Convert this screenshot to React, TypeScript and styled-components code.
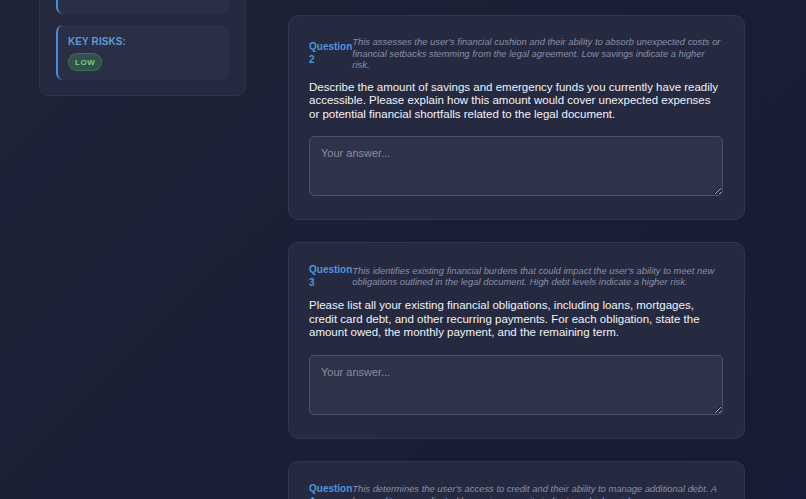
import styled, { createGlobalStyle } from 'styled-components';

const GlobalStyle = createGlobalStyle`
  html, body {
    margin: 0;
    padding: 0;
    height: 100%;
    overflow: hidden;
  }

  body {
    background: linear-gradient(135deg, #1e2338 0%, #1a1f35 50%, #171c36 100%);
    font-family: "Liberation Sans", Arial, Helvetica, sans-serif;
    color: #e8eaf2;
  }

  * {
    box-sizing: border-box;
  }
`;

const Layout = styled.div`
  display: flex;
  align-items: flex-start;
  gap: 42px;
  height: 499px;
  padding: 0 61px 0 39px;
  overflow: hidden;
`;

const Sidebar = styled.aside`
  flex: 0 0 207px;
  margin-top: -83px;
  padding: 16px 16px 15px;
  display: flex;
  flex-direction: column;
  gap: 11px;
  background: #242940;
  border: 1px solid #2e3349;
  border-radius: 9px;
`;

type InfoItemProps = {
  cut?: boolean;
};

const InfoItem = styled.div<InfoItemProps>`
  height: ${({ cut }) => (cut ? '80px' : 'auto')};
  padding: 11px 12px 9px 10px;
  background: #2b2f46;
  border-left: 2px solid #4a8fd8;
  border-radius: 7px;
  overflow: hidden;
`;

const InfoLabel = styled.div`
  margin-bottom: 4px;
  font-size: 10px;
  font-weight: 700;
  letter-spacing: 0.1px;
  color: #5a9ad8;
  text-transform: uppercase;
`;

const InfoText = styled.p`
  margin: 0;
  font-size: 10px;
  line-height: 1.3;
  color: #b7bccd;
`;

const Badge = styled.span`
  display: inline-block;
  padding: 4px 6px 3px;
  font-size: 8px;
  font-weight: 700;
  letter-spacing: 0.6px;
  color: #6fd17f;
  background: rgba(74, 170, 100, 0.28);
  border: 1px solid rgba(90, 190, 110, 0.3);
  border-radius: 9px;
`;

const Main = styled.main`
  flex: 1;
  margin-top: 15px;
  display: flex;
  flex-direction: column;
  gap: 22px;
`;

const QuestionCard = styled.section`
  padding: 20px 21px 23px 20px;
  background: #252a41;
  border: 1px solid #31364e;
  border-radius: 10px;
`;

const QuestionHeader = styled.div`
  display: flex;
  align-items: center;
  margin-bottom: 10px;
`;

const QuestionLabel = styled.span`
  width: min-content;
  font-size: 10px;
  font-weight: 700;
  line-height: 13px;
  color: #4f94dc;
`;

const QuestionHint = styled.p`
  flex: 1;
  margin: 0;
  font-size: 9.4px;
  font-style: italic;
  line-height: 11.5px;
  color: #8a8fa6;
`;

const QuestionText = styled.p`
  margin: 0 0 15px;
  font-size: 11.5px;
  line-height: 13.5px;
  color: #f1f2f7;
`;

const Answer = styled.textarea`
  display: block;
  width: 100%;
  height: 60px;
  padding: 10px 11px;
  font-family: "Liberation Sans", Arial, sans-serif;
  font-size: 11px;
  color: #e8eaf2;
  background: #2f3349;
  border: 1.5px solid #4c5169;
  border-radius: 5px;
  resize: vertical;
  outline: none;

  &::placeholder {
    color: #888ca0;
  }
`;

type Question = {
  number: number;
  hint: string;
  text: string;
};

const questions: Question[] = [
  {
    number: 2,
    hint: "This assesses the user's financial cushion and their ability to absorb unexpected costs or financial setbacks stemming from the legal agreement. Low savings indicate a higher risk.",
    text: 'Describe the amount of savings and emergency funds you currently have readily accessible. Please explain how this amount would cover unexpected expenses or potential financial shortfalls related to the legal document.',
  },
  {
    number: 3,
    hint: "This identifies existing financial burdens that could impact the user's ability to meet new obligations outlined in the legal document. High debt levels indicate a higher risk.",
    text: 'Please list all your existing financial obligations, including loans, mortgages, credit card debt, and other recurring payments. For each obligation, state the amount owed, the monthly payment, and the remaining term.',
  },
  {
    number: 4,
    hint: "This determines the user's access to credit and their ability to manage additional debt. A low credit score or limited borrowing capacity indicates a higher risk.",
    text: 'Please describe your current credit standing, including your credit score if known, and any lines of credit available to you.',
  },
];

function App(): JSX.Element {
  return (
    <>
      <GlobalStyle />
      <Layout>
        <Sidebar>
          <InfoItem cut>
            <InfoLabel>Summary:</InfoLabel>
            <InfoText>The agreement carries limited financial exposure.</InfoText>
          </InfoItem>
          <InfoItem>
            <InfoLabel>Key Risks:</InfoLabel>
            <Badge>LOW</Badge>
          </InfoItem>
        </Sidebar>
        <Main>
          {questions.map((q) => (
            <QuestionCard key={q.number}>
              <QuestionHeader>
                <QuestionLabel>Question {q.number}</QuestionLabel>
                <QuestionHint>{q.hint}</QuestionHint>
              </QuestionHeader>
              <QuestionText>{q.text}</QuestionText>
              <Answer placeholder="Your answer..." />
            </QuestionCard>
          ))}
        </Main>
      </Layout>
    </>
  );
}

export default App;
